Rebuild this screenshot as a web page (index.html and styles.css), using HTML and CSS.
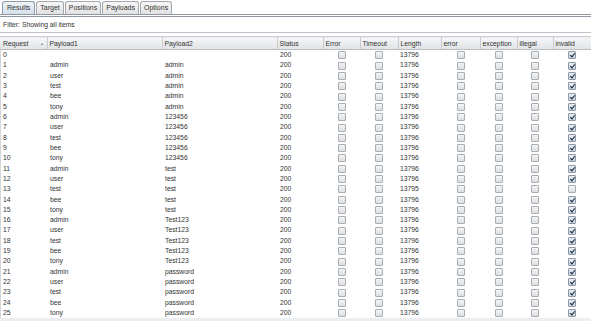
FILE: index.html
```html
<!DOCTYPE html>
<html lang="en">
<head>
    <meta charset="UTF-8">
    <title>Intruder attack results</title>
    <link rel="stylesheet" href="styles.css">
</head>
<body>
    <div class="tabs">
        <div class="tab active">Results</div>
        <div class="tab">Target</div>
        <div class="tab">Positions</div>
        <div class="tab">Payloads</div>
        <div class="tab">Options</div>
    </div>
    <div class="filter">Filter: Showing all items</div>
    <div class="table-wrap">
        <table class="results">
            <colgroup>
                <col style="width:47px"><col style="width:115px"><col style="width:115px"><col style="width:46px">
                <col style="width:37px"><col style="width:38px"><col style="width:43px"><col style="width:39px">
                <col style="width:37px"><col style="width:36px"><col style="width:38px">
            </colgroup>
            <thead>
                <tr>
                    <th class="sorted">Request<span class="arrow">&#9650;</span></th>
                    <th>Payload1</th><th>Payload2</th><th>Status</th><th>Error</th><th>Timeout</th>
                    <th>Length</th><th>error</th><th>exception</th><th>illegal</th><th>invalid</th>
                </tr>
            </thead>
            <tbody id="rows"></tbody>
        </table>
    </div>
    <div class="footer"></div>

    <script>
        const users = ['admin', 'user', 'test', 'bee', 'tony'];
        const passwords = ['admin', '123456', 'test', 'Test123', 'password'];
        const tbody = document.getElementById('rows');
        const box = on => `<td class="c"><span class="cb${on ? ' on' : ''}"></span></td>`;

        for (let i = 0; i <= 25; i++) {
            const p1 = i === 0 ? '' : users[(i - 1) % 5];
            const p2 = i === 0 ? '' : passwords[Math.floor((i - 1) / 5)];
            const hit = i !== 13;
            const tr = document.createElement('tr');
            tr.innerHTML = `<td>${i}</td><td>${p1}</td><td>${p2}</td><td>200</td>` +
                box(false) + box(false) + `<td>${hit ? 13796 : 13795}</td>` +
                box(false) + box(false) + box(false) + box(hit);
            tbody.appendChild(tr);
        }
    </script>
</body>
</html>
```

FILE: styles.css
```css
body { margin: 0; background: #ffffff; font-family: "Liberation Sans", Arial, sans-serif; font-size: 6.8px; color: #333333; width: 591px; height: 321px; overflow: hidden; display: flex; flex-direction: column; }
.tabs { display: flex; gap: 1px; padding: 1px 0 0 2px; height: 13px; border-bottom: 3px double #8d98a3; }
.tab { height: 12px; line-height: 12px; padding: 0 3px; border: 1px solid #a2a8ae; border-bottom: none; border-radius: 3px 3px 0 0; background: linear-gradient(#f7f7f7, #e2e2e2); font-size: 7px; color: #333333; }
.tab.active { padding: 0 4px; background: linear-gradient(#eef3f8, #d6e0ea); border-color: #8e9aa6; }
.filter { height: 15px; line-height: 16px; padding-left: 3px; border-bottom: 1px solid #bfc3c7; }
.table-wrap { margin-top: 3px; flex: 1; box-shadow: inset 1px 0 #d4d7da; }
.results { border-collapse: collapse; table-layout: fixed; width: 591px; }
.results th { height: 12px; padding: 0 0 0 2px; text-align: left; font-weight: normal; background: linear-gradient(#f5f6f7, #e0e3e6); border-top: 1px solid #c9cdd1; border-bottom: 1px solid #b9bec3; border-right: 1px solid #c6cace; white-space: nowrap; overflow: hidden; }
.results th.sorted { position: relative; padding-left: 3px; }
.arrow { position: absolute; left: 40px; top: 4px; font-size: 4px; color: #7d91a6; }
.results td { height: 10.32px; padding: 0 0 0 2px; line-height: 10px; white-space: nowrap; overflow: hidden; }
.results td:first-child { padding-left: 3px; }
.results td:nth-child(2), .results td:nth-child(3), .results td:nth-child(4) { padding-left: 3px; }
.results td.c { padding: 0; text-align: center; }
.cb { display: inline-block; width: 6px; height: 6px; border: 1px solid #a9aeb3; border-radius: 1px; background: linear-gradient(#f4f5f6, #dcdfe2); vertical-align: middle; position: relative; }
.cb.on { background: linear-gradient(#e6ecf2, #c9d4de); border-color: #8e9aa6; }
.cb.on::after { content: ""; position: absolute; left: 2px; top: 0px; width: 2px; height: 4px; border-right: 1.3px solid #1d2a3a; border-bottom: 1.3px solid #1d2a3a; transform: rotate(40deg); }
.footer { height: 4px; background: #eceeef; }
```
